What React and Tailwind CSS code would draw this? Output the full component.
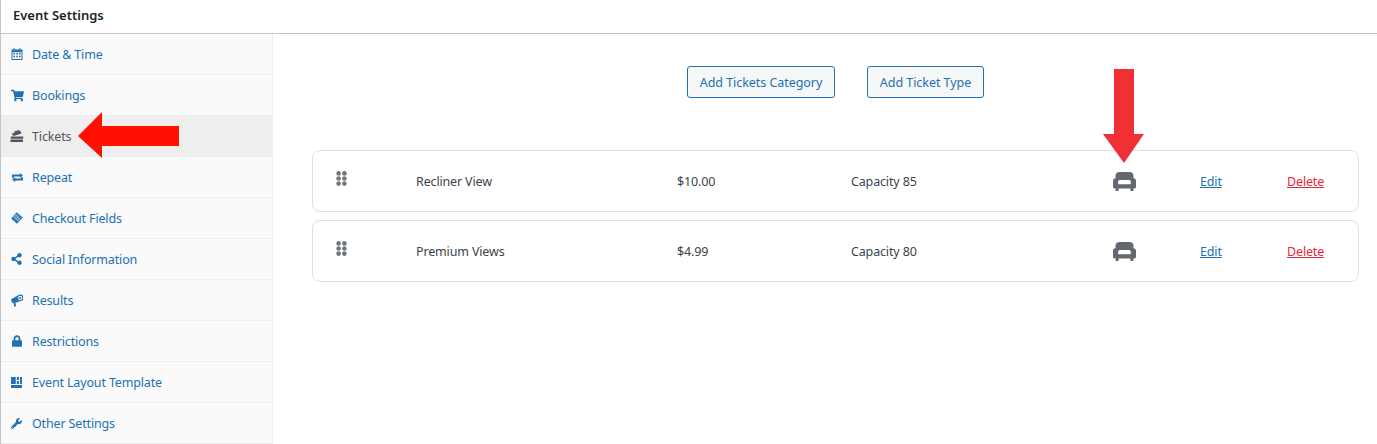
import React from "react";
import { FaShoppingCart, FaShareAlt, FaLock, FaWrench } from "react-icons/fa";

const Calendar = (p) => (
  <svg viewBox="0 0 12 12" {...p}>
    <path fill="currentColor" fillRule="evenodd" d="M.5 1.500h2V.2h1.200v1.300h4.600V.2h1.200v1.300h2V12H.5V1.500zm1 2.700v6.800h9V4.200h-9z" />
    <path fill="currentColor" d="M2.400 5h1.600v1.500H2.400zM5.200 5h1.600v1.500H5.200zM8 5h1.600v1.500H8zM2.400 7.800h1.600v1.500H2.400zM5.200 7.800h1.600v1.500H5.200zM8 7.800h1.600v1.500H8z" />
  </svg>
);
const TicketsIcon = (p) => (
  <svg viewBox="0 0 14 12" {...p}>
    <path fill="currentColor" d="M.5 9.600h12.500V12H.5zM.8 6.400h12.400v2.400H.8zM1.500 3.800 10.500.9l1 2.600-7.800 2.500zM4 1.500 9 0l.7 1.200-5 1.600z" />
  </svg>
);
const Repeat = (p) => (
  <svg viewBox="0 0 11 9" {...p}>
    <path fill="currentColor" d="M0 1.400h7.800V0L11 2.400 7.800 4.800V3.400H2v1.400H0zM11 7.600H3.200V9L0 6.600l3.200-2.400v1.400H9V4.200h2z" />
  </svg>
);
const TagIcon = (p) => (
  <svg viewBox="0 0 12 12" {...p}>
    <path fill="currentColor" d="M5.600.2 11.800 5.600 6 11.800.2 6.400z" />
    <path stroke="#fafafa" strokeWidth="0.6" d="M4.200 2.600l5 5M3 4.400l5 5M6.400 2 2.600 5.800M8 3.600 4.200 7.400M9.600 5.200 5.800 9" />
  </svg>
);
const Megaphone = (p) => (
  <svg viewBox="0 0 12 13" {...p}>
    <path fill="currentColor" d="M0 5.300 6.800 1.500c-.9 2.600-.3 5 1.400 6.500L4.500 8.400 5 12.600H3.200L2.400 8.600 1 8.800z" />
    <circle cx="9.300" cy="3.900" r="2.700" fill="none" stroke="currentColor" strokeWidth="1.200" />
    <circle cx="9.300" cy="3.900" r="1" fill="currentColor" />
  </svg>
);
const LayoutIcon = (p) => (
  <svg viewBox="0 0 11 11" {...p}>
    <path fill="currentColor" d="M0 0h4.800v7H0zM5.800 0H8v3H5.800zM5.800 4H8v3H5.800zM9 0h2v7H9zM0 8h11v3H0z" />
  </svg>
);
const Couch = (p) => (
  <svg viewBox="0 0 23 19" {...p}>
    <path
      fill="currentColor"
      d="M6.500 0h10C19 0 20.500 1.500 20.500 4v2.200h.2c1.300 0 2.300 1 2.300 2.300v6.300c0 .9-.7 1.600-1.600 1.600h-1V19h-3v-2.600H5.600V19h-3v-2.600h-1C.7 16.400 0 15.700 0 14.800V8.500c0-1.300 1-2.300 2.300-2.300h.2V4C2.500 1.500 4 0 6.500 0z"
    />
    <path fill="#ffffff" d="M5.200 9.800c0-1 .7-1.800 1.700-1.800h9.200c1 0 1.700.8 1.700 1.800v2.400H5.200z" />
  </svg>
);
const Grip = (p) => (
  <svg viewBox="0 0 11 15" {...p}>
    {[2.4, 7.5, 12.600].flatMap((y) =>
      [2.6, 8.400].map((x) => <circle key={`${x}-${y}`} cx={x} cy={y} r="2.300" fill="currentColor" />)
    )}
  </svg>
);

const items = [
  ["Date & Time", Calendar, "w-[12px] h-[12px]"],
  ["Bookings", FaShoppingCart, "w-[13px] h-[13px]"],
  ["Tickets", TicketsIcon, "w-[14px] h-[12px] -ml-[1px]", true],
  ["Repeat", Repeat, "w-[11px] h-[9px] ml-[1px]"],
  ["Checkout Fields", TagIcon, "w-[12px] h-[12px]"],
  ["Social Information", FaShareAlt, "w-[11px] h-[12px]"],
  ["Results", Megaphone, "w-[12px] h-[13px]"],
  ["Restrictions", FaLock, "w-[10px] h-[12px] ml-[1px]"],
  ["Event Layout Template", LayoutIcon, "w-[11px] h-[11px]"],
  ["Other Settings", FaWrench, "w-[11px] h-[11px]"],
];

const rows = [
  ["Recliner View", "$10.00", "Capacity 85"],
  ["Premium Views", "$4.99", "Capacity 80"],
];

export default function App() {
  return (
    <div className="relative w-[1377px] h-[444px] overflow-hidden bg-white border-l border-[#c3c4c7] text-[12.5px] tracking-[-0.15px] font-['Noto_Sans','Open_Sans',sans-serif]">
      <div className="h-[34px] flex items-center pl-[12px] pb-[1px] border-b border-[#c3c4c7] text-[13px] tracking-normal font-semibold text-[#1d2327]">
        Event Settings
      </div>
      <div className="flex">
        <ul className="w-[272px] shrink-0 bg-[#fafafa] border-r border-[#eeeeee]">
          {items.map(([label, Icon, size, active]) => (
            <li
              key={label}
              className={`h-[41px] flex items-center pl-[10px] border-b border-[#eeeeee] ${
                active ? "bg-[#eeeeee] text-[#50575e]" : "text-[#2271b1]"
              }`}
            >
              <span className="w-[21px] flex items-center">
                <Icon className={size} />
              </span>
              <span className="pt-[2px]">{label}</span>
            </li>
          ))}
        </ul>
        <main className="flex-1 pl-[39px] pr-[18px]">
          <div className="flex justify-center gap-[32px] pt-[32px]">
            <button className="w-[148px] h-[32px] pt-[3px] rounded-[3px] border border-[#2271b1] bg-[#f6f7f7] text-[#2271b1] tracking-[-0.05px]">
              Add Tickets Category
            </button>
            <button className="w-[117px] h-[32px] pt-[3px] rounded-[3px] border border-[#2271b1] bg-[#f6f7f7] text-[#2271b1] tracking-[-0.05px]">
              Add Ticket Type
            </button>
          </div>
          <div className="mt-[52px] flex flex-col gap-[8px]">
            {rows.map(([name, price, cap]) => (
              <div
                key={name}
                className="h-[62px] flex items-center rounded-[8px] border border-[#e0e0e4] text-[#3c434a] pl-[23px]"
              >
                <span className="w-[80px] -mt-[5px] flex">
                  <Grip className="w-[11px] h-[15px] text-[#71767c]" />
                </span>
                <span className="w-[261px] pt-[2px]">{name}</span>
                <span className="w-[174px] pt-[2px]">{price}</span>
                <span className="w-[262px] pt-[2px]">{cap}</span>
                <span className="w-[87px] flex">
                  <Couch className="w-[23px] h-[19px] text-[#646970]" />
                </span>
                <a className="w-[87px] pt-[2px] underline text-[#2271b1]">Edit</a>
                <a className="pt-[2px] underline text-[#e5273a]">Delete</a>
              </div>
            ))}
          </div>
        </main>
      </div>
      {/* Red annotation arrows lying over the page */}
      <svg className="absolute left-[76px] top-[110px] w-[103px] h-[50px]" viewBox="0 0 103 50">
        <path fill="#ff1000" d="M1 26 25 2v14h77v20H25v12z" />
      </svg>
      <svg className="absolute left-[1102px] top-[69px] w-[42px] h-[94px]" viewBox="0 0 42 94">
        <path fill="#f03034" d="M11 0h20v65H41L21 94 0 65h11z" />
      </svg>
    </div>
  );
}
